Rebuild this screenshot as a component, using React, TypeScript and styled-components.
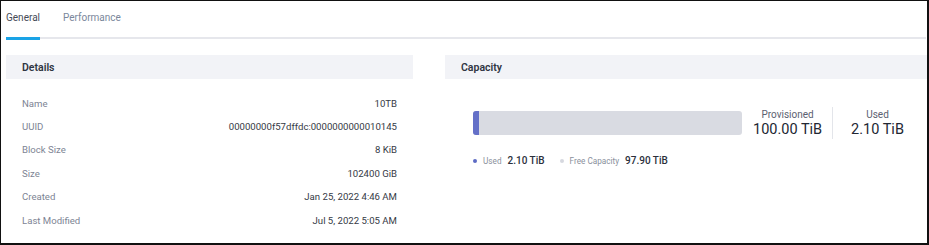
import styled, { createGlobalStyle } from 'styled-components';

type DetailRow = {
  label: string;
  value: string;
};

const DETAILS: DetailRow[] = [
  { label: 'Name', value: '10TB' },
  { label: 'UUID', value: '00000000f57dffdc:0000000000010145' },
  { label: 'Block Size', value: '8 KiB' },
  { label: 'Size', value: '102400 GiB' },
  { label: 'Created', value: 'Jan 25, 2022 4:46 AM' },
  { label: 'Last Modified', value: 'Jul 5, 2022 5:05 AM' },
];

const PROVISIONED = 100.0;
const USED = 2.1;

const GlobalStyle = createGlobalStyle`
  html, body {
    margin: 0;
    padding: 0;
    background: #ffffff;
  }
  body {
    font-family: Roboto, "Liberation Sans", Arial, sans-serif;
    -webkit-font-smoothing: antialiased;
  }
`;

export default function App() {
  const usedPercent = (USED / PROVISIONED) * 100;

  return (
    <>
      <GlobalStyle />
      <Frame>
        <TabBar>
          <Tab active>General</Tab>
          <Tab>Performance</Tab>
        </TabBar>
        <Columns>
          <Panel>
            <PanelHeader>Details</PanelHeader>
            <DetailList>
              {DETAILS.map(row => (
                <Row key={row.label}>
                  <Label>{row.label}</Label>
                  <Value>{row.value}</Value>
                </Row>
              ))}
            </DetailList>
          </Panel>
          <Panel>
            <PanelHeader>Capacity</PanelHeader>
            <CapacityBody>
              <CapacityTop>
                <Bar>
                  <BarFill style={{ width: `${usedPercent}%` }} />
                </Bar>
                <Stat>
                  <StatLabel>Provisioned</StatLabel>
                  <StatValue>{PROVISIONED.toFixed(2)} TiB</StatValue>
                </Stat>
                <Divider />
                <Stat>
                  <StatLabel>Used</StatLabel>
                  <StatValue>{USED.toFixed(2)} TiB</StatValue>
                </Stat>
              </CapacityTop>
              <Legend>
                <LegendItem>
                  <Dot color="#5d6bc4" />
                  <LegendLabel>Used</LegendLabel>
                  <LegendValue>{USED.toFixed(2)} TiB</LegendValue>
                </LegendItem>
                <LegendItem>
                  <Dot color="#d6d8df" />
                  <LegendLabel>Free Capacity</LegendLabel>
                  <LegendValue>{(PROVISIONED - USED).toFixed(2)} TiB</LegendValue>
                </LegendItem>
              </Legend>
            </CapacityBody>
          </Panel>
        </Columns>
      </Frame>
    </>
  );
}

const Frame = styled.div`
  box-sizing: border-box;
  width: 929px;
  height: 245px;
  border-style: solid;
  border-color: #111111;
  border-width: 1px 2px 2px 1px;
  padding-left: 5px;
  overflow: hidden;
  background: #ffffff;
`;

const TabBar = styled.div`
  display: flex;
  gap: 23px;
  height: 36px;
  border-bottom: 2px solid #e6e7ec;
  margin-right: 1px;
`;

interface TabProps {
  active?: boolean;
}

const Tab = styled.div<TabProps>`
  box-sizing: border-box;
  height: 39px;
  padding-bottom: 4px;
  display: flex;
  align-items: center;
  font-size: 10px;
  color: ${({ active }) => (active ? '#454b57' : '#7b879b')};
  border-bottom: 3px solid ${({ active }) => (active ? '#1aa3e6' : 'transparent')};
  cursor: pointer;
`;

const Columns = styled.div`
  display: grid;
  grid-template-columns: 407px 1fr;
  gap: 32px;
  margin-top: 16px;
`;

const Panel = styled.section`
  display: flex;
  flex-direction: column;
`;

const PanelHeader = styled.div`
  height: 24px;
  display: flex;
  align-items: center;
  padding-left: 16px;
  background-color: #f2f3f7;
  font-size: 10.5px;
  font-weight: 600;
  color: #2f3542;
`;

const DetailList = styled.div`
  display: flex;
  flex-direction: column;
  padding: 12.5px 16px 0 16px;
`;

const Row = styled.div`
  height: 23.4px;
  display: flex;
  justify-content: space-between;
  align-items: center;
  font-size: 9.6px;
`;

const Label = styled.span`
  color: #7d8494;
`;

const Value = styled.span`
  color: #353a45;
`;

const CapacityBody = styled.div`
  display: flex;
  flex-direction: column;
  padding: 28px 0 0 28px;
`;

const CapacityTop = styled.div`
  display: flex;
  align-items: center;
`;

const Bar = styled.div`
  width: 269px;
  height: 24px;
  border-radius: 3px;
  background-color: #d9dbe2;
  overflow: hidden;
  margin-right: 11px;
`;

const BarFill = styled.div`
  height: 100%;
  background-color: #6470c8;
`;

const Stat = styled.div`
  display: flex;
  flex-direction: column;
  align-items: center;
  gap: 1px;
`;

const StatLabel = styled.span`
  font-size: 10px;
  color: #5b6170;
`;

const StatValue = styled.span`
  font-size: 14.5px;
  color: #222733;
`;

const Divider = styled.div`
  width: 1px;
  height: 32px;
  background-color: #e3e5ea;
  margin: 0 18px 0 10px;
`;

const Legend = styled.div`
  display: flex;
  align-items: center;
  gap: 15px;
  margin-top: 16px;
`;

const LegendItem = styled.div`
  display: flex;
  align-items: center;
  gap: 6px;
`;

interface DotProps {
  color: string;
}

const Dot = styled.span<DotProps>`
  width: 4px;
  height: 4px;
  border-radius: 50%;
  background-color: ${({ color }) => color};
`;

const LegendLabel = styled.span`
  font-size: 8.2px;
  color: #8a909c;
`;

const LegendValue = styled.span`
  font-size: 10px;
  font-weight: 500;
  color: #2b303b;
`;
